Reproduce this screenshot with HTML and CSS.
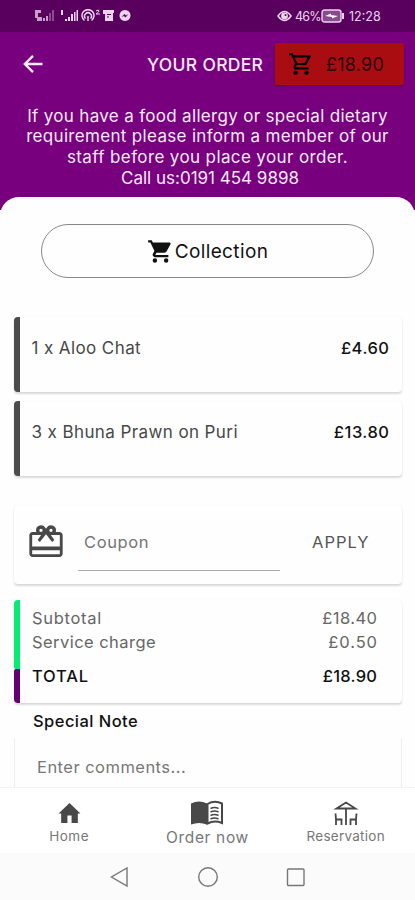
FILE: index.html
```
<!DOCTYPE html>
<html lang="en">
<head>
<meta charset="utf-8">
<title>Your order</title>
<link rel="stylesheet" href="styles.css">
</head>
<body>
<div class="screen">
  <div class="status">
    <div class="status-left">
      <svg width="98" height="14" viewBox="0 0 98 14" fill="currentColor">
        <path opacity=".75" d="M1 1h6v3H4v4h4v4H3V9H1zM9 9h2v3H9zM12 7h2v5h-2z"/>
        <path opacity=".35" d="M15 4h2v8h-2zM18 1h2v11h-2z"/>
        <path d="M27 1h2v5h-2zM31 10h2v2h-2zM34 8h2v4h-2zM37 5h2v7h-2zM40 3h1.500v9H40zM42.500 1H44v11h-1.500z"/>
        <g fill="none" stroke="currentColor" stroke-width="1.500"><path d="M50.500 11.500a6 6 0 1 1 7 0M51.500 9.500a3.400 3.400 0 1 1 5 0"/><path d="M54 7v5"/><path stroke-width="1" d="M62 2q3-2 3 0 0 1-3 3h4"/></g>
        <path fill-rule="evenodd" d="M69 1h11v3h-1v8h-8V5h-2zM73 5v1h4V5zM73 7.500v1h2v-1z"/>
        <path fill-rule="evenodd" d="M91 1a5.500 5.500 0 1 0 .01 0zM87.500 8l3-3 1.500 1.500L94.500 5l-3 3.500L90 7z"/>
      </svg>
    </div>
    <div class="status-right">
      <svg class="eye" width="15" height="12" viewBox="0 0 15 12"><path d="M1 6q6.500-9 13 0-6.500 9-13 0z" fill="none" stroke="currentColor" stroke-width="1.600"/><circle cx="7.500" cy="6" r="3.400" fill="currentColor"/><circle cx="8.500" cy="5" r="1" fill="#5b0060"/></svg>
      <span class="percent">46%</span>
      <svg class="battery" width="24" height="14" viewBox="0 0 24 14"><rect x="1" y="1" width="19" height="12" rx="2.500" fill="#8a4a90" stroke="currentColor" stroke-width="1.400"/><path d="M22 4v6" stroke="currentColor" stroke-width="2"/><path d="M4 7l6-2.500v1.500L17 7l-6 2.500V8z" fill="#fff"/></svg>
      <span class="clock">12:28</span>
    </div>
  </div>
  <header class="top">
    <div class="bar">
      <svg class="back" width="20" height="20" viewBox="0 0 20 20"><path d="M19.500 10H2M10 1.800L1.800 10l8.200 8.200" fill="none" stroke="#f8ecf9" stroke-width="2.400"/></svg>
      <h1 class="title">YOUR ORDER</h1>
      <button class="basket">
        <svg width="26" height="26" viewBox="0 0 24 24"><path d="M15.550 13c.750 0 1.410-.410 1.750-1.030l3.580-6.490A1 1 0 0 0 20.010 4H5.210l-.940-2H1v2h2l3.600 7.590-1.350 2.440C4.520 15.370 5.480 17 7 17h12v-2H7l1.100-2zM6.160 6h12.150l-2.760 5H8.530zM7 18a2 2 0 1 0 0 4 2 2 0 0 0 0-4zm10 0a2 2 0 1 0 0 4 2 2 0 0 0 0-4z"/></svg>
        <span class="basket-sum">£18.90</span>
      </button>
    </div>
    <div class="notice">
      <div class="n1">If you have a food allergy or special dietary</div>
      <div class="n2">requirement please inform a member of our</div>
      <div class="n3">staff before you place your order.</div>
      <div class="n4">Call us:0191 454 9898</div>
    </div>
  </header>
  <main class="sheet">
    <button class="collection">
      <svg width="27" height="27" viewBox="0 0 24 24"><path d="M7 18a2 2 0 1 0 0 4 2 2 0 0 0 0-4zm10 0a2 2 0 1 0 0 4 2 2 0 0 0 0-4zM1 2v2h2l3.600 7.590-1.350 2.440C4.520 15.370 5.480 17 7 17h12v-2H7.400l1-2h7.150c.750 0 1.410-.410 1.750-1.030l3.580-6.490A1 1 0 0 0 20.010 4H5.210l-.940-2z" fill="#111"/></svg>
      <span class="collection-text">Collection</span>
    </button>
    <section class="card item first">
      <span class="name">1 x Aloo Chat</span><span class="price">£4.60</span>
    </section>
    <section class="card item">
      <span class="name">3 x Bhuna Prawn on Puri</span><span class="price">£13.80</span>
    </section>
    <section class="card coupon">
      <svg class="gift" width="40" height="40" viewBox="0 0 24 24" fill="#484848"><path d="M20 6h-2.180c.110-.310.180-.650.180-1a3 3 0 0 0-5.500-1.650l-.500.670-.500-.680A3 3 0 0 0 6 5c0 .350.070.690.180 1H4c-1.110 0-1.990.890-1.990 2L2 19c0 1.110.890 2 2 2h16c1.110 0 2-.890 2-2V8c0-1.110-.890-2-2-2zm-5-2a1 1 0 1 1 0 2 1 1 0 0 1 0-2zM9 4a1 1 0 1 1 0 2 1 1 0 0 1 0-2zm11.300 15.300H3.700V17h16.600zm0-4.600H3.700V7.800h5.380L7 10.830 8.300 12 12 7.400l3.700 4.600L17 10.830 14.920 7.800h5.380z"/></svg>
      <div class="field"><span class="coupon-text">Coupon</span></div>
      <span class="apply">APPLY</span>
    </section>
    <section class="card totals">
      <div class="strip"><i class="green"></i><i class="purple"></i></div>
      <div class="rows">
        <div class="row"><span class="sub">Subtotal</span><span class="sum">£18.40</span></div>
        <div class="row"><span class="service">Service charge</span><span class="sum short">£0.50</span></div>
        <div class="row total"><span class="total-label">TOTAL</span><span class="sum">£18.90</span></div>
      </div>
    </section>
    <h2 class="note-title">Special Note</h2>
    <section class="note"><span class="note-text">Enter comments...</span></section>
  </main>
  <nav class="tabs">
    <div class="tab">
      <svg width="27" height="25" viewBox="0 0 24 24" fill="#484848"><path d="M10 21v-7h4v7h6v-9h2.500L12 2 1.500 12H4v9z"/></svg>
      <span class="home">Home</span>
    </div>
    <div class="tab active">
      <svg width="34" height="27" viewBox="0 0 34 27"><path d="M1 3.500q8-4 16 0v21q-8-3-16 0z" fill="#484848"/><path d="M17.500 4q7-4 14.500-.500v19.500q-7.500-3-14.500.500z" fill="#fff" stroke="#484848" stroke-width="2"/><path d="M20.500 8.500q4-2 8 0M20.500 12q4-2 8 0M20.500 15.500q4-2 8 0M20.500 19q4-2 8 0" fill="none" stroke="#484848" stroke-width="1.500"/></svg>
      <span class="order">Order now</span>
    </div>
    <div class="tab">
      <svg width="26" height="25" viewBox="0 0 26 25" fill="none" stroke="#484848" stroke-width="1.800"><path d="M3.500 7.500L13 1.500l9.500 6zM13 7.500V24M2.500 12.500l.5 6h5.500V24M3 18v6M23.500 12.500l-.5 6h-5.500V24M23 18v6"/></svg>
      <span class="reservation">Reservation</span>
    </div>
  </nav>
  <div class="system">
    <svg width="20" height="22" viewBox="0 0 20 22"><path d="M17 2v18L1.500 11z"/></svg>
    <svg width="22" height="22" viewBox="0 0 22 22"><circle cx="11" cy="11" r="9.300"/></svg>
    <svg width="20" height="22" viewBox="0 0 20 22"><rect x="1.500" y="3" width="16.500" height="16.500" rx="1"/></svg>
  </div>
</div>
</body>
</html>
```
FILE: styles.css
```
* { box-sizing: border-box; }
body { margin: 0; font-family: Inter, "Noto Sans", sans-serif; background: #fefefe; color: #111; }
svg { display: block; flex: none; }
button { font: inherit; margin: 0; padding: 0; border: 0; color: inherit; }
span, h1, h2, .notice div { white-space: nowrap; }
.screen { width: 415px; height: 900px; display: flex; flex-direction: column; overflow: hidden; }
.status { height: 32px; flex: none; background: #59005f; color: #ead5ec; display: flex; justify-content: space-between; align-items: center; padding: 0 33px 0 34px; font-size: 12.500px; }
.status-right { display: flex; align-items: center; margin-right: 1px; }
.percent { margin-left: 3px; width: 26px; letter-spacing: -0.8px; }
.clock { margin-left: 4px; width: 32px; }
.top { height: 178px; flex: none; background: #78007f; color: #f6e9f7; }
.bar { height: 64px; display: flex; align-items: center; padding: 0 11px 0 23px; }
.title { margin: 0 0 0 104px; width: 128px; font-size: 17.500px; font-weight: 500; letter-spacing: 0.3px; }
.basket { width: 129px; height: 42px; background: #a90d12; border-radius: 2px; color: #290407; display: flex; align-items: center; padding-left: 13px; box-shadow: 0 1px 3px #40004480; }
.basket-sum { margin-left: 12px; font-size: 18px; letter-spacing: 0.25px; }
.notice { margin-top: 9.500px; text-align: center; font-size: 17px; line-height: 20.700px; letter-spacing: 0.32px; }
.n3 { letter-spacing: 0.38px; }
.n4 { letter-spacing: 0; padding-left: 5px; }
.sheet { flex: 1; min-height: 0; margin-top: -13px; background: #fefefe; border-radius: 19px 19px 0 0; padding: 27px 13px 0 14px; overflow: hidden; }
.collection { display: flex; align-items: center; justify-content: center; width: 333px; height: 54px; margin-left: 27px; border: 1px solid #888; border-radius: 27px; background: #fefefe; }
.collection-text { font-size: 19px; margin-left: 1px; letter-spacing: 0.38px; }
.card { background: #fefefe; border-radius: 4px; box-shadow: 0 2px 2px #00000024, 0 0 1px #00000018; }
.item { height: 75px; border-left: 6px solid #4b4c4c; display: flex; justify-content: space-between; padding: 21px 13px 0 11.500px; font-size: 17px; line-height: 20px; color: #484848; margin-top: 9px; }
.first { margin-top: 39px; }
.name { letter-spacing: 0.4px; }
.price { font-size: 16.500px; font-weight: 500; color: #111; letter-spacing: 0.5px; margin-right: -0.5px; }
.coupon { height: 79px; margin-top: 29px; display: flex; align-items: flex-start; padding: 17px 0 0 12px; font-size: 16.500px; color: #555; }
.field { margin-left: 12px; width: 202px; height: 49px; border-bottom: 1px solid #aaa; padding: 10px 0 0 6px; line-height: 20px; color: #757575; }
.coupon-text { letter-spacing: 0.6px; }
.apply { margin-left: 32px; padding-top: 10px; line-height: 20px; letter-spacing: 1px; }
.totals { height: 103px; margin-top: 16px; display: flex; color: #666; font-size: 16.500px; }
.strip { width: 6px; display: flex; flex-direction: column; }
.green { height: 69px; background: #05ec73; border-radius: 4px 0 0 2px; }
.purple { flex: 1; background: #650070; border-radius: 2px 0 0 4px; }
.rows { flex: 1; padding: 7px 25px 0 12px; }
.row { display: flex; justify-content: space-between; line-height: 23.500px; }
.sub { letter-spacing: 0.7px; }
.service { letter-spacing: 0.45px; }
.sum { letter-spacing: 0.45px; margin-right: -0.45px; }
.short { letter-spacing: 0.9px; margin-right: -0.9px; }
.total { margin-top: 11px; color: #111; font-weight: 500; }
.total .sum { letter-spacing: 0.25px; margin-right: -0.25px; }
.total-label { letter-spacing: 0.8px; }
.note-title { margin: 7px 0 0 19px; font-size: 16.500px; font-weight: 500; line-height: 22px; letter-spacing: 0.45px; }
.note { margin-top: 6px; height: 60px; border: solid #eee; border-width: 0 1px; padding: 18px 22px; font-size: 16.500px; line-height: 22px; color: #777; letter-spacing: 0.47px; }
.tabs { height: 66px; flex: none; background: #fff; border-top: 1px solid #f3f3f3; display: flex; color: #777; }
.tab { width: 138.300px; padding-top: 13px; display: flex; flex-direction: column; align-items: center; font-size: 13.500px; line-height: 20px; }
.active { padding-top: 12px; font-size: 15.500px; line-height: 22px; }
.home { letter-spacing: 0.5px; }
.order { letter-spacing: 0.65px; }
.reservation { letter-spacing: 0.25px; }
.system { height: 47px; flex: none; background: #fbfbfb; display: flex; gap: 67px; justify-content: center; align-items: center; }
.system svg { fill: none; stroke: #777; stroke-width: 1.400; }
```
